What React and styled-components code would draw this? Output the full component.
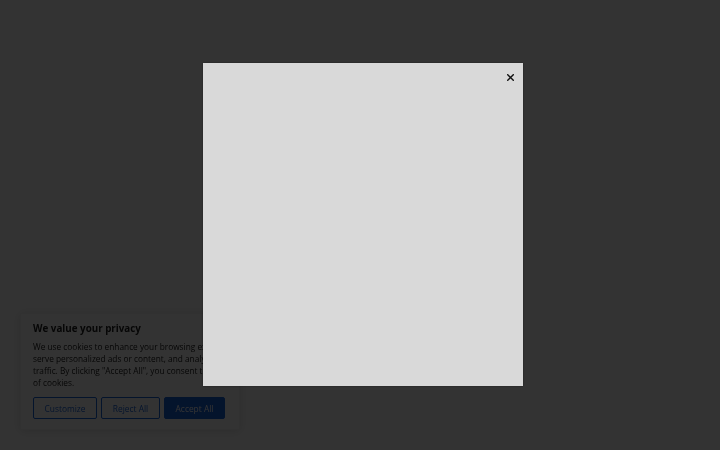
import React from "react";
import styled, { createGlobalStyle } from "styled-components";

const Global = createGlobalStyle`
  html, body { margin: 0; padding: 0; background: #ffffff; }
  body { font-family: "Open Sans", "Liberation Sans", sans-serif; width: 720px; height: 450px; overflow: hidden; }
`;

const Page = styled.div`
  width: 720px;
  height: 450px;
  background: #ffffff;
`;

const Banner = styled.section`
  position: fixed;
  left: 20px;
  top: 313px;
  width: 220px;
  box-sizing: border-box;
  padding: 9px 13px 10px 12px;
  background: #ffffff;
  border: 1px solid #f4f4f4;
  box-shadow: 0 1px 10px rgba(0, 0, 0, 0.15);
  display: flex;
  flex-direction: column;
`;

const Title = styled.h2`
  margin: 0 0 6px;
  font-size: 9.8px;
  font-weight: 700;
  color: #212121;
  line-height: 12px;
  white-space: nowrap;
`;

const Body = styled.p`
  margin: 0 0 8px;
  font-size: 8.3px;
  line-height: 12px;
  color: #212121;
  white-space: nowrap;
`;

const Actions = styled.div`
  display: flex;
  gap: 4px;
`;

const Btn = styled.button`
  width: ${(p) => p.$w}px;
  height: 22px;
  padding: 0;
  font-family: "Open Sans", "Liberation Sans", sans-serif;
  font-size: 8.4px;
  font-weight: 500;
  border: 1px solid #1863dc;
  border-radius: 2px;
  color: ${(p) => (p.$primary ? "#ffffff" : "#1863dc")};
  background: ${(p) => (p.$primary ? "#1863dc" : "transparent")};
`;

const Overlay = styled.div`
  position: fixed;
  inset: 0;
  background: rgba(0, 0, 0, 0.8);
`;

const Dialog = styled.div`
  position: fixed;
  left: 203px;
  top: 63px;
  width: 320px;
  height: 323px;
  background: #d9d9d9;
  box-shadow: 0 0 2px rgba(0, 0, 0, 0.4);
`;

const Close = styled.button`
  position: absolute;
  top: 8px;
  right: 7px;
  width: 12px;
  height: 12px;
  padding: 0;
  border: 0;
  background: transparent;
  display: flex;
  align-items: center;
  justify-content: center;
`;

export default function App() {
  return (
    <Page>
      <Global />
      <Banner>
        <Title>We value your privacy</Title>
        <Body>
          We use cookies to enhance your browsing experience,
          <br />
          serve personalized ads or content, and analyze our
          <br />
          traffic. By clicking "Accept All", you consent to our use
          <br />
          of cookies.
        </Body>
        <Actions>
          <Btn $w={64}>Customize</Btn>
          <Btn $w={59}>Reject All</Btn>
          <Btn $w={61} $primary>Accept All</Btn>
        </Actions>
      </Banner>
      <Overlay />
      <Dialog>
        <Close aria-label="Close">
          <svg width="7" height="7" viewBox="0 0 10 10">
            <path d="M1 1L9 9M9 1L1 9" stroke="#111" strokeWidth="2" strokeLinecap="square" />
          </svg>
        </Close>
      </Dialog>
    </Page>
  );
}
